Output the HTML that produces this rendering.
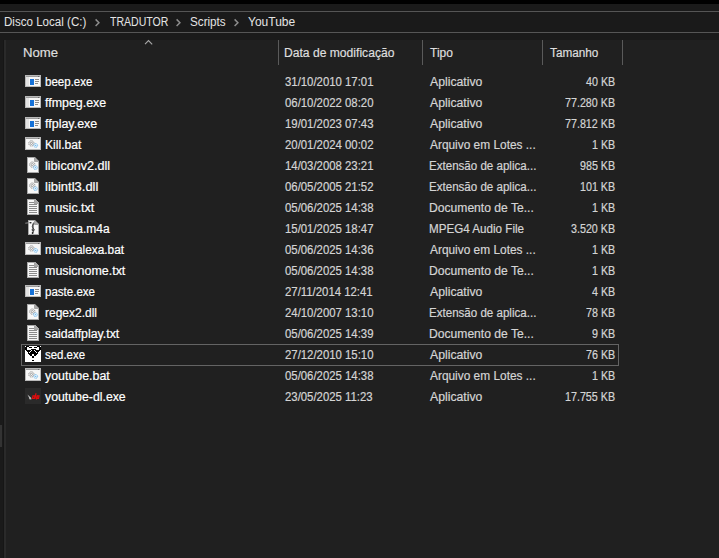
<!DOCTYPE html>
<html><head><meta charset="utf-8">
<style>
html,body{margin:0;padding:0;width:719px;height:558px;overflow:hidden;background:#1a1a1a;}
body{position:relative;font-family:"Liberation Sans",sans-serif;font-size:12px;}
.abs{position:absolute;}
#top{left:0;top:0;width:719px;height:4px;background:#000;}
#addr{left:0;top:11px;width:719px;height:20px;border-top:1px solid #555;border-bottom:1px solid #555;background:#1a1a1a;}
#list{left:4px;top:40px;width:715px;height:518px;background:#202020;}
#lborder{left:4px;top:40px;width:2px;height:518px;background:#2a2a2a;}
#lshadow{left:3px;top:40px;width:1px;height:518px;background:#161616;}
#thumb{left:0;top:425px;width:2px;height:22px;background:#333;}
.t{position:absolute;white-space:pre;line-height:14px;transform-origin:0 0;-webkit-text-stroke:0.2px currentColor;}
.crumb{color:#e4e4e4;}
.hdr{color:#dedede;}
.nm{color:#ffffff;}
.dt{color:#d4d4d4;}
.div{position:absolute;top:40px;width:1px;height:25px;background:#5a5a5a;}
</style></head><body>
<div class="abs" id="top"></div>
<div class="abs" id="addr"></div>
<div class="abs" id="list"></div>
<div class="abs" id="lshadow"></div>
<div class="abs" id="lborder"></div>
<div class="abs" id="thumb"></div>
<span class="t crumb" style="-webkit-text-stroke:0;left:4.04px;top:15px;transform:scaleX(0.9643)">Disco Local (C:)</span>
<span class="t crumb" style="-webkit-text-stroke:0;left:110.00px;top:15px;transform:scaleX(0.8788)">TRADUTOR</span>
<span class="t crumb" style="-webkit-text-stroke:0;left:190.00px;top:15px;transform:scaleX(0.9730)">Scripts</span>
<span class="t crumb" style="-webkit-text-stroke:0;left:248.00px;top:15px;transform:scaleX(1.0000)">YouTube</span>
<svg class="abs" style="left:94.0px;top:18px" width="8" height="10"><path d="M1.6 1.4L4.9 4.7L1.6 8" fill="none" stroke="#8c8c8c" stroke-width="1.5"/></svg>
<svg class="abs" style="left:175.0px;top:18px" width="8" height="10"><path d="M1.6 1.4L4.9 4.7L1.6 8" fill="none" stroke="#8c8c8c" stroke-width="1.5"/></svg>
<svg class="abs" style="left:233.0px;top:18px" width="8" height="10"><path d="M1.6 1.4L4.9 4.7L1.6 8" fill="none" stroke="#8c8c8c" stroke-width="1.5"/></svg>
<span class="t hdr" style="left:22.90px;top:46px;transform:scaleX(1.0968)">Nome</span>
<span class="t hdr" style="left:283.99px;top:46px;transform:scaleX(1.0092)">Data de modificação</span>
<span class="t hdr" style="left:430.00px;top:46px;transform:scaleX(1.0000)">Tipo</span>
<span class="t hdr" style="left:550.00px;top:46px;transform:scaleX(0.9800)">Tamanho</span>
<svg class="abs" style="left:143px;top:38px" width="12" height="8"><path d="M2 6.1L5.5 2.5L9.2 6.4" fill="none" stroke="#a8a8a8" stroke-width="1.1"/></svg>
<div class="div" style="left:278px"></div>
<div class="div" style="left:422px"></div>
<div class="div" style="left:542px"></div>
<div class="div" style="left:622px"></div>
<div class="abs" style="left:21px;top:344px;width:596px;height:20px;border:1px solid #646464"></div>
<svg class="abs" style="left:25px;top:73px" width="16" height="16" shape-rendering="crispEdges"><rect x="0" y="2" width="16" height="12" fill="#b9b9b9"/><rect x="1" y="3" width="14" height="1" fill="#9c9c9c"/><rect x="13" y="3" width="1" height="1" fill="#6a6a6a"/><rect x="1" y="4" width="14" height="9" fill="#f7f7f7"/><rect x="1" y="4" width="3" height="9" fill="#e4e4e4"/><rect x="5" y="6" width="4" height="6" fill="#1672d8"/><rect x="10" y="6" width="4" height="1" fill="#8c8c8c"/><rect x="10" y="8" width="4" height="1" fill="#8c8c8c"/><rect x="10" y="10" width="3" height="1" fill="#8c8c8c"/></svg>
<span class="t nm" style="left:45.00px;top:75px;transform:scaleX(0.9600)">beep.exe</span>
<span class="t dt" style="left:285.00px;top:75px;transform:scaleX(0.9468)">31/10/2010 17:01</span>
<span class="t dt" style="left:430.00px;top:75px;transform:scaleX(1.0192)">Aplicativo</span>
<span class="t dt" style="left:585.54px;top:75px;transform:scaleX(0.8929)">40 KB</span>
<svg class="abs" style="left:25px;top:94px" width="16" height="16" shape-rendering="crispEdges"><rect x="0" y="2" width="16" height="12" fill="#b9b9b9"/><rect x="1" y="3" width="14" height="1" fill="#9c9c9c"/><rect x="13" y="3" width="1" height="1" fill="#6a6a6a"/><rect x="1" y="4" width="14" height="9" fill="#f7f7f7"/><rect x="1" y="4" width="3" height="9" fill="#e4e4e4"/><rect x="5" y="6" width="4" height="6" fill="#1672d8"/><rect x="10" y="6" width="4" height="1" fill="#8c8c8c"/><rect x="10" y="8" width="4" height="1" fill="#8c8c8c"/><rect x="10" y="10" width="3" height="1" fill="#8c8c8c"/></svg>
<span class="t nm" style="left:45.00px;top:96px;transform:scaleX(1.0339)">ffmpeg.exe</span>
<span class="t dt" style="left:285.00px;top:96px;transform:scaleX(0.9468)">06/10/2022 08:20</span>
<span class="t dt" style="left:430.00px;top:96px;transform:scaleX(1.0192)">Aplicativo</span>
<span class="t dt" style="left:565.00px;top:96px;transform:scaleX(0.8929)">77.280 KB</span>
<svg class="abs" style="left:25px;top:115px" width="16" height="16" shape-rendering="crispEdges"><rect x="0" y="2" width="16" height="12" fill="#b9b9b9"/><rect x="1" y="3" width="14" height="1" fill="#9c9c9c"/><rect x="13" y="3" width="1" height="1" fill="#6a6a6a"/><rect x="1" y="4" width="14" height="9" fill="#f7f7f7"/><rect x="1" y="4" width="3" height="9" fill="#e4e4e4"/><rect x="5" y="6" width="4" height="6" fill="#1672d8"/><rect x="10" y="6" width="4" height="1" fill="#8c8c8c"/><rect x="10" y="8" width="4" height="1" fill="#8c8c8c"/><rect x="10" y="10" width="3" height="1" fill="#8c8c8c"/></svg>
<span class="t nm" style="left:45.00px;top:117px;transform:scaleX(1.0400)">ffplay.exe</span>
<span class="t dt" style="left:285.00px;top:117px;transform:scaleX(0.9468)">19/01/2023 07:43</span>
<span class="t dt" style="left:430.00px;top:117px;transform:scaleX(1.0192)">Aplicativo</span>
<span class="t dt" style="left:565.00px;top:117px;transform:scaleX(0.8929)">77.812 KB</span>
<svg class="abs" style="left:25px;top:136px" width="16" height="16"><rect x="0" y="1" width="16" height="13" fill="#b9b9b9"/><rect x="1" y="2" width="14" height="1" fill="#9c9c9c"/><rect x="13" y="2" width="1" height="1" fill="#6a6a6a"/><rect x="1" y="3" width="14" height="10" fill="#f7f7f7"/><circle cx="6.4" cy="7.4" r="2.6" fill="#fafafa" stroke="#8a8a8a" stroke-width="1" stroke-dasharray="1.3 0.7"/><circle cx="6.4" cy="7.4" r="1.1" fill="none" stroke="#8a8a8a" stroke-width="0.8"/><circle cx="10.7" cy="9.4" r="1.9" fill="#e6f3fc" stroke="#62b0ea" stroke-width="0.9" stroke-dasharray="1 0.5"/><circle cx="10.7" cy="9.4" r="0.6" fill="#62b0ea"/></svg>
<span class="t nm" style="left:44.59px;top:138px;transform:scaleX(1.0111)">Kill.bat</span>
<span class="t dt" style="left:285.00px;top:138px;transform:scaleX(0.9468)">20/01/2024 00:02</span>
<span class="t dt" style="left:430.00px;top:138px;transform:scaleX(0.9906)">Arquivo em Lotes ...</span>
<span class="t dt" style="left:591.79px;top:138px;transform:scaleX(0.8929)">1 KB</span>
<svg class="abs" style="left:25px;top:157px" width="16" height="16"><path d="M2 0H10L14 4V16H2Z" fill="#a8a8a8"/><path d="M3 1H9.5V4.5H13V15H3Z" fill="#f7f7f7"/><path d="M9.5 0.5V4.5H13.5" fill="none" stroke="#a4a4a4" stroke-width="1"/><circle cx="7.3" cy="7.6" r="2.6" fill="#fafafa" stroke="#8a8a8a" stroke-width="1" stroke-dasharray="1.3 0.7"/><circle cx="7.3" cy="7.6" r="1.1" fill="none" stroke="#8a8a8a" stroke-width="0.8"/><circle cx="10.4" cy="10.6" r="1.9" fill="#e6f3fc" stroke="#62b0ea" stroke-width="0.9" stroke-dasharray="1 0.5"/><circle cx="10.4" cy="10.6" r="0.6" fill="#62b0ea"/></svg>
<span class="t nm" style="left:45.00px;top:159px;transform:scaleX(1.0484)">libiconv2.dll</span>
<span class="t dt" style="left:285.00px;top:159px;transform:scaleX(0.9468)">14/03/2008 23:21</span>
<span class="t dt" style="left:429.04px;top:159px;transform:scaleX(0.9636)">Extensão de aplica...</span>
<span class="t dt" style="left:580.18px;top:159px;transform:scaleX(0.8929)">985 KB</span>
<svg class="abs" style="left:25px;top:178px" width="16" height="16"><path d="M2 0H10L14 4V16H2Z" fill="#a8a8a8"/><path d="M3 1H9.5V4.5H13V15H3Z" fill="#f7f7f7"/><path d="M9.5 0.5V4.5H13.5" fill="none" stroke="#a4a4a4" stroke-width="1"/><circle cx="7.3" cy="7.6" r="2.6" fill="#fafafa" stroke="#8a8a8a" stroke-width="1" stroke-dasharray="1.3 0.7"/><circle cx="7.3" cy="7.6" r="1.1" fill="none" stroke="#8a8a8a" stroke-width="0.8"/><circle cx="10.4" cy="10.6" r="1.9" fill="#e6f3fc" stroke="#62b0ea" stroke-width="0.9" stroke-dasharray="1 0.5"/><circle cx="10.4" cy="10.6" r="0.6" fill="#62b0ea"/></svg>
<span class="t nm" style="left:45.00px;top:180px;transform:scaleX(1.0816)">libintl3.dll</span>
<span class="t dt" style="left:285.00px;top:180px;transform:scaleX(0.9468)">06/05/2005 21:52</span>
<span class="t dt" style="left:429.04px;top:180px;transform:scaleX(0.9636)">Extensão de aplica...</span>
<span class="t dt" style="left:580.18px;top:180px;transform:scaleX(0.8929)">101 KB</span>
<svg class="abs" style="left:25px;top:199px" width="16" height="16" shape-rendering="crispEdges"><path d="M2 0H10L14 4V16H2Z" fill="#a8a8a8"/><path d="M3 1H9.5V4.5H13V15H3Z" fill="#f7f7f7"/><path d="M9.5 0.5V4.5H13.5" fill="none" stroke="#a4a4a4" stroke-width="1"/><rect x="4" y="3" width="5" height="1" fill="#8a8a8a"/><rect x="4" y="5" width="8" height="1" fill="#8a8a8a"/><rect x="4" y="7" width="8" height="1" fill="#8a8a8a"/><rect x="4" y="9" width="8" height="1" fill="#8a8a8a"/><rect x="4" y="11" width="8" height="1" fill="#8a8a8a"/><rect x="4" y="13" width="8" height="1" fill="#8a8a8a"/></svg>
<span class="t nm" style="left:45.00px;top:201px;transform:scaleX(1.0417)">music.txt</span>
<span class="t dt" style="left:285.00px;top:201px;transform:scaleX(0.9468)">05/06/2025 14:38</span>
<span class="t dt" style="left:428.99px;top:201px;transform:scaleX(1.0098)">Documento de Te...</span>
<span class="t dt" style="left:591.79px;top:201px;transform:scaleX(0.8929)">1 KB</span>
<svg class="abs" style="left:25px;top:220px" width="16" height="16"><path d="M3 0H10L14 4V15H3Z" fill="#a8a8a8"/><path d="M4 1H9.5V4.5H13V14H4Z" fill="#f7f7f7"/><path d="M9.5 0.5V4.5H13.5" fill="none" stroke="#a4a4a4" stroke-width="1"/><path d="M0.3 3.2L5.5 2.6" fill="none" stroke="#9a9a9a" stroke-width="0.9"/><ellipse cx="5.6" cy="2.7" rx="1" ry="0.8" fill="#222"/><path d="M8.6 2.6C9.2 4 7.2 5 7.3 6.6C7.4 8 8.9 8.6 9.2 9.6C9.4 10.6 8.2 11.2 7.4 10.6C6.8 10 7.2 9 8 8.8M8 3.5L8.2 12.6" fill="none" stroke="#2a2a2a" stroke-width="0.95"/><circle cx="7.6" cy="13" r="0.9" fill="#1a1a1a"/></svg>
<span class="t nm" style="left:45.00px;top:222px;transform:scaleX(1.0000)">musica.m4a</span>
<span class="t dt" style="left:285.00px;top:222px;transform:scaleX(0.9468)">15/01/2025 18:47</span>
<span class="t dt" style="left:429.03px;top:222px;transform:scaleX(0.9691)">MPEG4 Audio File</span>
<span class="t dt" style="left:571.25px;top:222px;transform:scaleX(0.8929)">3.520 KB</span>
<svg class="abs" style="left:25px;top:241px" width="16" height="16"><rect x="0" y="1" width="16" height="13" fill="#b9b9b9"/><rect x="1" y="2" width="14" height="1" fill="#9c9c9c"/><rect x="13" y="2" width="1" height="1" fill="#6a6a6a"/><rect x="1" y="3" width="14" height="10" fill="#f7f7f7"/><circle cx="6.4" cy="7.4" r="2.6" fill="#fafafa" stroke="#8a8a8a" stroke-width="1" stroke-dasharray="1.3 0.7"/><circle cx="6.4" cy="7.4" r="1.1" fill="none" stroke="#8a8a8a" stroke-width="0.8"/><circle cx="10.7" cy="9.4" r="1.9" fill="#e6f3fc" stroke="#62b0ea" stroke-width="0.9" stroke-dasharray="1 0.5"/><circle cx="10.7" cy="9.4" r="0.6" fill="#62b0ea"/></svg>
<span class="t nm" style="left:45.00px;top:243px;transform:scaleX(0.9877)">musicalexa.bat</span>
<span class="t dt" style="left:285.00px;top:243px;transform:scaleX(0.9468)">05/06/2025 14:36</span>
<span class="t dt" style="left:430.00px;top:243px;transform:scaleX(0.9906)">Arquivo em Lotes ...</span>
<span class="t dt" style="left:591.79px;top:243px;transform:scaleX(0.8929)">1 KB</span>
<svg class="abs" style="left:25px;top:262px" width="16" height="16" shape-rendering="crispEdges"><path d="M2 0H10L14 4V16H2Z" fill="#a8a8a8"/><path d="M3 1H9.5V4.5H13V15H3Z" fill="#f7f7f7"/><path d="M9.5 0.5V4.5H13.5" fill="none" stroke="#a4a4a4" stroke-width="1"/><rect x="4" y="3" width="5" height="1" fill="#8a8a8a"/><rect x="4" y="5" width="8" height="1" fill="#8a8a8a"/><rect x="4" y="7" width="8" height="1" fill="#8a8a8a"/><rect x="4" y="9" width="8" height="1" fill="#8a8a8a"/><rect x="4" y="11" width="8" height="1" fill="#8a8a8a"/><rect x="4" y="13" width="8" height="1" fill="#8a8a8a"/></svg>
<span class="t nm" style="left:45.00px;top:264px;transform:scaleX(1.0385)">musicnome.txt</span>
<span class="t dt" style="left:285.00px;top:264px;transform:scaleX(0.9468)">05/06/2025 14:38</span>
<span class="t dt" style="left:428.99px;top:264px;transform:scaleX(1.0098)">Documento de Te...</span>
<span class="t dt" style="left:591.79px;top:264px;transform:scaleX(0.8929)">1 KB</span>
<svg class="abs" style="left:25px;top:283px" width="16" height="16" shape-rendering="crispEdges"><rect x="0" y="2" width="16" height="12" fill="#b9b9b9"/><rect x="1" y="3" width="14" height="1" fill="#9c9c9c"/><rect x="13" y="3" width="1" height="1" fill="#6a6a6a"/><rect x="1" y="4" width="14" height="9" fill="#f7f7f7"/><rect x="1" y="4" width="3" height="9" fill="#e4e4e4"/><rect x="5" y="6" width="4" height="6" fill="#1672d8"/><rect x="10" y="6" width="4" height="1" fill="#8c8c8c"/><rect x="10" y="8" width="4" height="1" fill="#8c8c8c"/><rect x="10" y="10" width="3" height="1" fill="#8c8c8c"/></svg>
<span class="t nm" style="left:45.00px;top:285px;transform:scaleX(0.9615)">paste.exe</span>
<span class="t dt" style="left:285.00px;top:285px;transform:scaleX(0.9468)">27/11/2014 12:41</span>
<span class="t dt" style="left:430.00px;top:285px;transform:scaleX(1.0192)">Aplicativo</span>
<span class="t dt" style="left:591.79px;top:285px;transform:scaleX(0.8929)">4 KB</span>
<svg class="abs" style="left:25px;top:304px" width="16" height="16"><path d="M2 0H10L14 4V16H2Z" fill="#a8a8a8"/><path d="M3 1H9.5V4.5H13V15H3Z" fill="#f7f7f7"/><path d="M9.5 0.5V4.5H13.5" fill="none" stroke="#a4a4a4" stroke-width="1"/><circle cx="7.3" cy="7.6" r="2.6" fill="#fafafa" stroke="#8a8a8a" stroke-width="1" stroke-dasharray="1.3 0.7"/><circle cx="7.3" cy="7.6" r="1.1" fill="none" stroke="#8a8a8a" stroke-width="0.8"/><circle cx="10.4" cy="10.6" r="1.9" fill="#e6f3fc" stroke="#62b0ea" stroke-width="0.9" stroke-dasharray="1 0.5"/><circle cx="10.4" cy="10.6" r="0.6" fill="#62b0ea"/></svg>
<span class="t nm" style="left:45.00px;top:306px;transform:scaleX(1.0000)">regex2.dll</span>
<span class="t dt" style="left:285.00px;top:306px;transform:scaleX(0.9468)">24/10/2007 13:10</span>
<span class="t dt" style="left:429.04px;top:306px;transform:scaleX(0.9636)">Extensão de aplica...</span>
<span class="t dt" style="left:585.54px;top:306px;transform:scaleX(0.8929)">78 KB</span>
<svg class="abs" style="left:25px;top:325px" width="16" height="16" shape-rendering="crispEdges"><path d="M2 0H10L14 4V16H2Z" fill="#a8a8a8"/><path d="M3 1H9.5V4.5H13V15H3Z" fill="#f7f7f7"/><path d="M9.5 0.5V4.5H13.5" fill="none" stroke="#a4a4a4" stroke-width="1"/><rect x="4" y="3" width="5" height="1" fill="#8a8a8a"/><rect x="4" y="5" width="8" height="1" fill="#8a8a8a"/><rect x="4" y="7" width="8" height="1" fill="#8a8a8a"/><rect x="4" y="9" width="8" height="1" fill="#8a8a8a"/><rect x="4" y="11" width="8" height="1" fill="#8a8a8a"/><rect x="4" y="13" width="8" height="1" fill="#8a8a8a"/></svg>
<span class="t nm" style="left:45.00px;top:327px;transform:scaleX(1.0274)">saidaffplay.txt</span>
<span class="t dt" style="left:285.00px;top:327px;transform:scaleX(0.9468)">05/06/2025 14:39</span>
<span class="t dt" style="left:428.99px;top:327px;transform:scaleX(1.0098)">Documento de Te...</span>
<span class="t dt" style="left:591.79px;top:327px;transform:scaleX(0.8929)">9 KB</span>
<svg class="abs" style="left:25px;top:346px" width="16" height="16" shape-rendering="crispEdges"><rect x="0" y="0" width="16" height="16" fill="#fff"/><rect x="1" y="0" width="1" height="1" fill="#000"/><rect x="2" y="0" width="1" height="1" fill="#000"/><rect x="3" y="0" width="1" height="1" fill="#000"/><rect x="12" y="0" width="1" height="1" fill="#000"/><rect x="13" y="0" width="1" height="1" fill="#000"/><rect x="14" y="0" width="1" height="1" fill="#000"/><rect x="0" y="1" width="1" height="1" fill="#000"/><rect x="1" y="1" width="1" height="1" fill="#000"/><rect x="4" y="1" width="1" height="1" fill="#000"/><rect x="5" y="1" width="1" height="1" fill="#000"/><rect x="6" y="1" width="1" height="1" fill="#000"/><rect x="9" y="1" width="1" height="1" fill="#000"/><rect x="10" y="1" width="1" height="1" fill="#000"/><rect x="11" y="1" width="1" height="1" fill="#000"/><rect x="14" y="1" width="1" height="1" fill="#000"/><rect x="15" y="1" width="1" height="1" fill="#000"/><rect x="0" y="2" width="1" height="1" fill="#000"/><rect x="1" y="2" width="1" height="1" fill="#000"/><rect x="14" y="2" width="1" height="1" fill="#000"/><rect x="15" y="2" width="1" height="1" fill="#000"/><rect x="0" y="3" width="1" height="1" fill="#000"/><rect x="1" y="3" width="1" height="1" fill="#000"/><rect x="6" y="3" width="1" height="1" fill="#000"/><rect x="7" y="3" width="1" height="1" fill="#000"/><rect x="8" y="3" width="1" height="1" fill="#000"/><rect x="9" y="3" width="1" height="1" fill="#000"/><rect x="10" y="3" width="1" height="1" fill="#000"/><rect x="14" y="3" width="1" height="1" fill="#000"/><rect x="15" y="3" width="1" height="1" fill="#000"/><rect x="1" y="4" width="1" height="1" fill="#000"/><rect x="2" y="4" width="1" height="1" fill="#000"/><rect x="3" y="4" width="1" height="1" fill="#000"/><rect x="4" y="4" width="1" height="1" fill="#000"/><rect x="5" y="4" width="1" height="1" fill="#000"/><rect x="7" y="4" width="1" height="1" fill="#000"/><rect x="8" y="4" width="1" height="1" fill="#000"/><rect x="10" y="4" width="1" height="1" fill="#000"/><rect x="11" y="4" width="1" height="1" fill="#000"/><rect x="12" y="4" width="1" height="1" fill="#000"/><rect x="13" y="4" width="1" height="1" fill="#000"/><rect x="14" y="4" width="1" height="1" fill="#000"/><rect x="2" y="5" width="1" height="1" fill="#000"/><rect x="3" y="5" width="1" height="1" fill="#000"/><rect x="4" y="5" width="1" height="1" fill="#000"/><rect x="6" y="5" width="1" height="1" fill="#000"/><rect x="7" y="5" width="1" height="1" fill="#000"/><rect x="8" y="5" width="1" height="1" fill="#000"/><rect x="9" y="5" width="1" height="1" fill="#000"/><rect x="11" y="5" width="1" height="1" fill="#000"/><rect x="12" y="5" width="1" height="1" fill="#000"/><rect x="13" y="5" width="1" height="1" fill="#000"/><rect x="3" y="6" width="1" height="1" fill="#000"/><rect x="5" y="6" width="1" height="1" fill="#000"/><rect x="6" y="6" width="1" height="1" fill="#000"/><rect x="7" y="6" width="1" height="1" fill="#000"/><rect x="8" y="6" width="1" height="1" fill="#000"/><rect x="9" y="6" width="1" height="1" fill="#000"/><rect x="10" y="6" width="1" height="1" fill="#000"/><rect x="12" y="6" width="1" height="1" fill="#000"/><rect x="3" y="7" width="1" height="1" fill="#000"/><rect x="4" y="7" width="1" height="1" fill="#000"/><rect x="5" y="7" width="1" height="1" fill="#000"/><rect x="6" y="7" width="1" height="1" fill="#000"/><rect x="7" y="7" width="1" height="1" fill="#000"/><rect x="8" y="7" width="1" height="1" fill="#000"/><rect x="9" y="7" width="1" height="1" fill="#000"/><rect x="10" y="7" width="1" height="1" fill="#000"/><rect x="11" y="7" width="1" height="1" fill="#000"/><rect x="12" y="7" width="1" height="1" fill="#000"/><rect x="4" y="8" width="1" height="1" fill="#000"/><rect x="5" y="8" width="1" height="1" fill="#000"/><rect x="6" y="8" width="1" height="1" fill="#000"/><rect x="9" y="8" width="1" height="1" fill="#000"/><rect x="10" y="8" width="1" height="1" fill="#000"/><rect x="11" y="8" width="1" height="1" fill="#000"/><rect x="5" y="9" width="1" height="1" fill="#000"/><rect x="6" y="9" width="1" height="1" fill="#000"/><rect x="9" y="9" width="1" height="1" fill="#000"/><rect x="10" y="9" width="1" height="1" fill="#000"/><rect x="7" y="10" width="1" height="1" fill="#000"/><rect x="8" y="10" width="1" height="1" fill="#000"/><rect x="7" y="11" width="1" height="1" fill="#000"/><rect x="8" y="11" width="1" height="1" fill="#000"/><rect x="7" y="14" width="1" height="1" fill="#000"/><rect x="8" y="14" width="1" height="1" fill="#000"/></svg>
<span class="t nm" style="left:45.00px;top:348px;transform:scaleX(0.9524)">sed.exe</span>
<span class="t dt" style="left:285.00px;top:348px;transform:scaleX(0.9468)">27/12/2010 15:10</span>
<span class="t dt" style="left:430.00px;top:348px;transform:scaleX(1.0192)">Aplicativo</span>
<span class="t dt" style="left:585.54px;top:348px;transform:scaleX(0.8929)">76 KB</span>
<svg class="abs" style="left:25px;top:367px" width="16" height="16"><rect x="0" y="1" width="16" height="13" fill="#b9b9b9"/><rect x="1" y="2" width="14" height="1" fill="#9c9c9c"/><rect x="13" y="2" width="1" height="1" fill="#6a6a6a"/><rect x="1" y="3" width="14" height="10" fill="#f7f7f7"/><circle cx="6.4" cy="7.4" r="2.6" fill="#fafafa" stroke="#8a8a8a" stroke-width="1" stroke-dasharray="1.3 0.7"/><circle cx="6.4" cy="7.4" r="1.1" fill="none" stroke="#8a8a8a" stroke-width="0.8"/><circle cx="10.7" cy="9.4" r="1.9" fill="#e6f3fc" stroke="#62b0ea" stroke-width="0.9" stroke-dasharray="1 0.5"/><circle cx="10.7" cy="9.4" r="0.6" fill="#62b0ea"/></svg>
<span class="t nm" style="left:45.00px;top:369px;transform:scaleX(1.0317)">youtube.bat</span>
<span class="t dt" style="left:285.00px;top:369px;transform:scaleX(0.9468)">05/06/2025 14:38</span>
<span class="t dt" style="left:430.00px;top:369px;transform:scaleX(0.9906)">Arquivo em Lotes ...</span>
<span class="t dt" style="left:591.79px;top:369px;transform:scaleX(0.8929)">1 KB</span>
<svg class="abs" style="left:25px;top:388px" width="16" height="16"><rect x="0" y="0" width="16" height="16" fill="#2a2a2a"/><path d="M2.4 6.6L6.9 10.4L5.6 10.6L6.6 11.4L4.4 11.2L4 9.6Z" fill="#c4c4c4"/><g transform="translate(0.4 -0.5) skewX(-12)" fill="none" stroke="#e40c0c" stroke-width="1.25"><path d="M9.4 8.4h2v2.4h-2z"/><path d="M11.8 5.8v5.6"/><path d="M13.6 8.4h1.8v2.4h-1.8z"/><path d="M13.6 8v4"/></g></svg>
<span class="t nm" style="left:45.00px;top:390px;transform:scaleX(1.0253)">youtube-dl.exe</span>
<span class="t dt" style="left:285.00px;top:390px;transform:scaleX(0.9468)">23/05/2025 11:23</span>
<span class="t dt" style="left:430.00px;top:390px;transform:scaleX(1.0192)">Aplicativo</span>
<span class="t dt" style="left:565.00px;top:390px;transform:scaleX(0.8929)">17.755 KB</span>
</body></html>
